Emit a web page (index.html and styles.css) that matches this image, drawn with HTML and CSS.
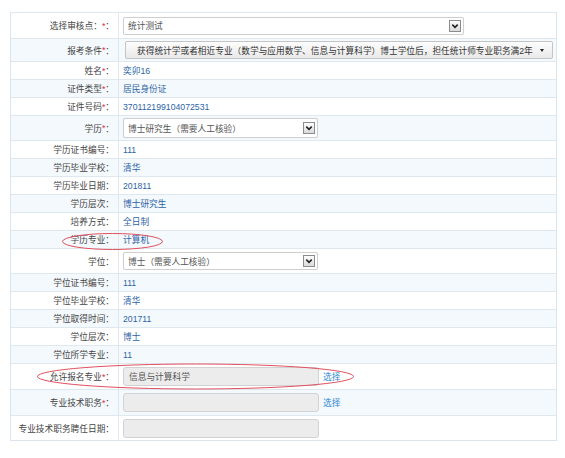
FILE: index.html
```html
<!DOCTYPE html>
<html>
<head>
<meta charset="utf-8">
<link rel="stylesheet" href="styles.css">
</head>
<body>
<div class="page">
  <div class="form">
    <div class="row h26">
      <div class="lbl">选择审核点：<span class="req">*</span>：</div>
      <div class="val"><div class="sel w341"><span class="st">统计测试</span><svg class="arr" width="12" height="12" viewBox="0 0 12 12"><defs><linearGradient id="g1" x1="0" y1="0" x2="0" y2="1"><stop offset="0" stop-color="#ffffff"/><stop offset="1" stop-color="#d8d8d8"/></linearGradient></defs><rect x="0.5" y="0.5" width="11" height="11" fill="url(#g1)" stroke="#8c8c8c"/><path d="M3.3 4.6 L6 7.3 L8.7 4.6" stroke="#222" stroke-width="1.6" fill="none"/></svg></div></div>
    </div>
    <div class="row h23">
      <div class="lbl">报考条件 <span class="req">*</span>：</div>
      <div class="val"><div class="btnsel"><span class="bt">获得统计学或者相近专业（数学与应用数学、信息与计算科学）博士学位后，担任统计师专业职务满2年</span><span class="tri"></span></div></div>
    </div>
    <div class="row h18">
      <div class="lbl">姓名<span class="req">*</span>：</div>
      <div class="val"><span class="v">奕卯16</span></div>
    </div>
    <div class="row h18">
      <div class="lbl">证件类型<span class="req">*</span>：</div>
      <div class="val"><span class="v">居民身份证</span></div>
    </div>
    <div class="row h18">
      <div class="lbl">证件号码<span class="req">*</span>：</div>
      <div class="val"><span class="v">370112199104072531</span></div>
    </div>
    <div class="row h25">
      <div class="lbl">学历<span class="req">*</span>：</div>
      <div class="val"><div class="sel w195 s20"><span class="st">博士研究生（需要人工核验）</span><svg class="arr" width="12" height="12" viewBox="0 0 12 12"><defs><linearGradient id="g2" x1="0" y1="0" x2="0" y2="1"><stop offset="0" stop-color="#ffffff"/><stop offset="1" stop-color="#d8d8d8"/></linearGradient></defs><rect x="0.5" y="0.5" width="11" height="11" fill="url(#g2)" stroke="#8c8c8c"/><path d="M3.3 4.6 L6 7.3 L8.7 4.6" stroke="#222" stroke-width="1.6" fill="none"/></svg></div></div>
    </div>
    <div class="row h18">
      <div class="lbl">学历证书编号：</div>
      <div class="val"><span class="v">111</span></div>
    </div>
    <div class="row h18">
      <div class="lbl">学历毕业学校：</div>
      <div class="val"><span class="v">清华</span></div>
    </div>
    <div class="row h18">
      <div class="lbl">学历毕业日期：</div>
      <div class="val"><span class="v">201811</span></div>
    </div>
    <div class="row h18">
      <div class="lbl">学历层次：</div>
      <div class="val"><span class="v">博士研究生</span></div>
    </div>
    <div class="row h18">
      <div class="lbl">培养方式：</div>
      <div class="val"><span class="v">全日制</span></div>
    </div>
    <div class="row h18">
      <div class="lbl">学历专业：</div>
      <div class="val"><span class="v">计算机</span></div>
    </div>
    <div class="row h25">
      <div class="lbl">学位：</div>
      <div class="val"><div class="sel w195"><span class="st">博士（需要人工核验）</span><svg class="arr" width="12" height="12" viewBox="0 0 12 12"><defs><linearGradient id="g3" x1="0" y1="0" x2="0" y2="1"><stop offset="0" stop-color="#ffffff"/><stop offset="1" stop-color="#d8d8d8"/></linearGradient></defs><rect x="0.5" y="0.5" width="11" height="11" fill="url(#g3)" stroke="#8c8c8c"/><path d="M3.3 4.6 L6 7.3 L8.7 4.6" stroke="#222" stroke-width="1.6" fill="none"/></svg></div></div>
    </div>
    <div class="row h18">
      <div class="lbl">学位证书编号：</div>
      <div class="val"><span class="v">111</span></div>
    </div>
    <div class="row h18">
      <div class="lbl">学位毕业学校：</div>
      <div class="val"><span class="v">清华</span></div>
    </div>
    <div class="row h18">
      <div class="lbl">学位取得时间：</div>
      <div class="val"><span class="v">201711</span></div>
    </div>
    <div class="row h18">
      <div class="lbl">学位层次：</div>
      <div class="val"><span class="v">博士</span></div>
    </div>
    <div class="row h18">
      <div class="lbl">学位所学专业：</div>
      <div class="val"><span class="v">11</span></div>
    </div>
    <div class="row h26">
      <div class="lbl">允许报名专业<span class="req">*</span>：</div>
      <div class="val"><div class="inp">信息与计算科学</div><a class="pick">选择</a></div>
    </div>
    <div class="row h26">
      <div class="lbl">专业技术职务<span class="req">*</span>：</div>
      <div class="val"><div class="inp"></div><a class="pick">选择</a></div>
    </div>
    <div class="row h25">
      <div class="lbl">专业技术职务聘任日期：</div>
      <div class="val"><div class="inp"></div></div>
    </div>
  </div>
  <svg class="marks" width="565" height="458" viewBox="0 0 565 458">
    <ellipse cx="112.5" cy="241.5" rx="50" ry="8" fill="none" stroke="#e0505e" stroke-width="1"/>
    <ellipse cx="195.5" cy="376.5" rx="158" ry="12.5" fill="none" stroke="#e0505e" stroke-width="1"/>
  </svg>
</div>
</body>
</html>
```

FILE: styles.css
```css
html, body {
  margin: 0;
  padding: 0;
  background: #ffffff;
}
body {
  font-family: "Liberation Sans", "Noto Sans CJK SC", sans-serif;
  font-size: 8.7px;
  color: #444444;
}
.page {
  position: relative;
  width: 565px;
  height: 458px;
  padding-top: 12px;
  box-sizing: border-box;
}
.form {
  margin-left: 10px;
  width: 547px;
  box-sizing: border-box;
  border-left: 1px solid #dbe5ef;
  border-right: 1px solid #dbe5ef;
  border-bottom: 1px solid #dbe5ef;
}
.row {
  display: flex;
  box-sizing: border-box;
  border-top: 1px solid #dfe7ef;
}
.row:nth-child(even) {
  background: #f4f9fd;
}
.h18 { height: 18px; }
.h23 { height: 23px; }
.h25 { height: 25px; }
.h26 { height: 26px; }
.lbl {
  width: 108px;
  flex: none;
  box-sizing: border-box;
  border-right: 1px solid #dfe7ef;
  display: flex;
  align-items: center;
  justify-content: flex-end;
  padding-right: 4px;
  color: #444444;
  white-space: nowrap;
}
.req {
  color: #e0303a;
}
.val {
  flex: 1;
  display: flex;
  align-items: center;
  padding-left: 4px;
  white-space: nowrap;
}
.v {
  color: #2d64a5;
}
.sel {
  height: 18px;
  box-sizing: border-box;
  border: 1px solid #cfcfcf;
  border-radius: 2px;
  background: #ffffff;
  box-shadow: 0 0 1px rgba(0,0,0,0.08);
  display: flex;
  align-items: center;
  justify-content: space-between;
  padding-left: 4px;
  padding-right: 2px;
}
.s20 { height: 20px; }
.w341 { width: 341px; }
.w195 { width: 195px; }
.st {
  color: #555555;
}
.arr {
  display: block;
  flex: none;
}
.btnsel {
  margin-left: 2px;
  width: 428px;
  height: 18px;
  box-sizing: border-box;
  border: 1px solid #c4c4c4;
  border-radius: 2px;
  background: linear-gradient(#fdfdfd, #e9e9e9);
  display: flex;
  align-items: center;
  padding-left: 11px;
  padding-right: 8px;
  justify-content: space-between;
}
.bt {
  color: #333333;
}
.tri {
  width: 0;
  height: 0;
  border-left: 2.5px solid transparent;
  border-right: 2.5px solid transparent;
  border-top: 3px solid #222;
}
.inp {
  width: 196px;
  height: 19px;
  box-sizing: border-box;
  border: 1px solid #d2d2d2;
  border-radius: 3px;
  background: #ececec;
  display: flex;
  align-items: center;
  padding-left: 5px;
  color: #555555;
}
.pick {
  margin-left: 4px;
  color: #2a86d4;
}
.marks {
  position: absolute;
  left: 0;
  top: 0;
  pointer-events: none;
}
```
